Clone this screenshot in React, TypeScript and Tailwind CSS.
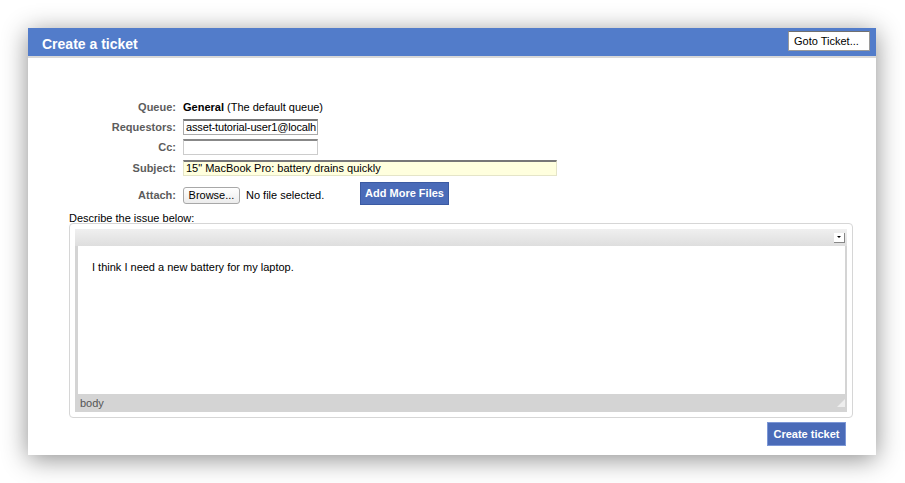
export default function App() {
  const label = "w-[155px] shrink-0 pr-[7px] text-right text-[11px] text-[#5c5c5c] font-bold";
  const field = "h-[16px] border-t-2 bg-white text-[11px] leading-[13px] pl-[2px] overflow-hidden whitespace-nowrap";
  return (
    <div className="w-[905px] h-[483px] bg-white pt-[28px] pl-[28px] font-['Liberation_Sans',Arial,sans-serif]">
      <div className="w-[848px] h-[427px] bg-white shadow-[0_4px_24px_rgba(0,0,0,0.45)] flex flex-col">
        <div className="h-[30px] bg-[#527cca] border-b-[2px] border-[#d8d8d8] flex items-center justify-between pl-[14px] pr-[6px]">
          <h1 className="text-white font-bold text-[14px] mt-[4px]">Create a ticket</h1>
          <div className="w-[82px] h-[20px] bg-white border border-[#9a9a9a] border-t-[#707070] text-[11px] text-black pl-[5px] leading-[18px] mb-[2px]">
            Goto Ticket...
          </div>
        </div>

        <div className="pt-[41px] flex flex-col">
          <div className="flex items-center h-[17px]">
            <div className={label}>Queue:</div>
            <div className="text-[11px] text-black"><span className="font-bold">General</span> (The default queue)</div>
          </div>
          <div className="flex items-center h-[20px] mt-[1px]">
            <div className={label}>Requestors:</div>
            <div className={`w-[135px] border border-[#aaa] border-t-[#777] tracking-[-0.15px] ${field}`}>
              asset-tutorial-user1@localh
            </div>
          </div>
          <div className="flex items-center h-[20px]">
            <div className={label}>Cc:</div>
            <div className="w-[135px] h-[16px] border border-[#ccc] border-t-[#888] border-t-2 bg-white" />
          </div>
          <div className="flex items-center h-[20px] mt-[1px]">
            <div className={label}>Subject:</div>
            <div className={`w-[374px] border border-[#e5e5c8] border-t-[#777] !bg-[#ffffde] ${field}`}>
              15" MacBook Pro: battery drains quickly
            </div>
          </div>
          <div className="flex items-center h-[24px] mt-[5px]">
            <div className={label}>Attach:</div>
            <div className="w-[177px] flex items-center">
              <div className="h-[17px] w-[57px] border border-[#a8a8a8] rounded-[3px] bg-gradient-to-b from-white to-[#ececec] text-[11px] leading-[15px] text-center">
                Browse...
              </div>
              <span className="ml-[6px] text-[11px]">No file selected.</span>
            </div>
            <div className="h-[23px] w-[89px] bg-[#4a6bb8] border border-[#3b5aa2] text-white text-[11px] font-bold flex items-center justify-center whitespace-nowrap -mt-[3px]">
              Add More Files
            </div>
          </div>
          <div className="pl-[41px] mt-[5px] text-[11px] leading-[13px] text-black">Describe the issue below:</div>
          <div className="ml-[41px] -mt-[2px] w-[784px] h-[195px] border border-[#d6d6d6] rounded-[4px] p-[5px] flex flex-col">
            <div className="h-[17px] bg-gradient-to-b from-[#f0f0f0] to-[#dedede] flex items-center justify-end pr-[2px]">
              <div className="w-[11px] h-[10px] bg-white border-r border-b border-[#888] flex items-center justify-center">
                <div className="w-0 h-0 border-l-[2px] border-r-[2px] border-t-[2px] border-l-transparent border-r-transparent border-t-black" />
              </div>
            </div>
            <div className="flex-1 bg-white border-l-[3px] border-r-[2px] border-[#d4d4d4] pt-[13px] pl-[14px] text-[11px] text-black">
              I think I need a new battery for my laptop.
            </div>
            <div className="h-[18px] bg-[#d4d4d4] flex items-center justify-between pl-[5px] pr-[2px]">
              <span className="text-[11px] text-[#555]">body</span>
              <svg width="8" height="8" viewBox="0 0 8 8">
                <path d="M8 0 L8 8 L0 8 Z" fill="#eeeeee" />
              </svg>
            </div>
          </div>
          <div className="flex justify-end pr-[30px] mt-[4px]">
            <div className="h-[24px] w-[79px] bg-[#4a6bb8] border border-[#7c97d6] text-white text-[11px] font-bold flex items-center justify-center whitespace-nowrap">
              Create ticket
            </div>
          </div>
        </div>
      </div>
    </div>
  );
}
